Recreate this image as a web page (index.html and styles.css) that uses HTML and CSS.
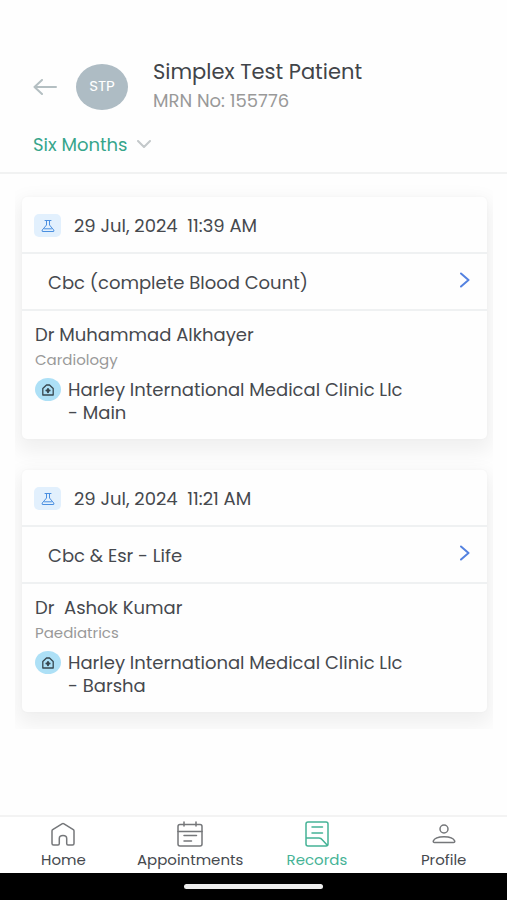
FILE: index.html
```html
<!DOCTYPE html>
<html lang="en">
<head>
    <meta charset="UTF-8">
    <meta name="viewport" content="width=device-width, initial-scale=1.0">
    <title>Records</title>
    <link rel="stylesheet" href="styles.css">
</head>
<body>
    <header class="header">
        <div class="patient">
            <button class="back" type="button" aria-label="Back">
                <svg width="24" height="16" viewBox="0 0 24 16"><path d="M23 8H2M9 1L1.500 8L9 15"/></svg>
            </button>
            <div class="avatar">STP</div>
            <div class="patient-info">
                <h1>Simplex Test Patient</h1>
                <p>MRN No: 155776</p>
            </div>
        </div>
        <div class="period">
            <select class="period-select" aria-label="Period">
                <option>Six Months</option>
            </select>
            <svg class="period-arrow" width="14" height="8" viewBox="0 0 14 8"><path d="M1 1L7 7L13 1"/></svg>
        </div>
    </header>

    <main class="records">
        <article class="card">
            <div class="card-date">
                <span class="lab-icon">
                    <svg width="14" height="14" viewBox="0 0 14 14"><path d="M4 1.500H10M5.500 1.500V6L1.300 11Q.3 12.500 2 12.500H12Q13.700 12.500 12.700 11L8.500 6V1.500M3.500 9.800H10.500"/></svg>
                </span>
                <time>29 Jul, 2024  11:39 AM</time>
            </div>
            <a class="card-test" href="#">
                <span>Cbc (complete Blood Count)</span>
                <svg width="10" height="16" viewBox="0 0 10 16"><path d="M1 1.500L8.500 8L1 14.500"/></svg>
            </a>
            <div class="card-body">
                <h2>Dr Muhammad Alkhayer</h2>
                <p class="speciality">Cardiology</p>
                <div class="clinic">
                    <span class="clinic-icon">
                        <svg width="12" height="12" viewBox="0 0 12 12"><path d="M.8 11V4.500L4.500 1H7.500L11.200 4.500V11Z"/><path class="cross" d="M6 5V8.200M4.400 6.600H7.600"/></svg>
                    </span>
                    <p>Harley International Medical Clinic Llc<br>- Main</p>
                </div>
            </div>
        </article>

        <article class="card">
            <div class="card-date">
                <span class="lab-icon">
                    <svg width="14" height="14" viewBox="0 0 14 14"><path d="M4 1.500H10M5.500 1.500V6L1.300 11Q.3 12.500 2 12.500H12Q13.700 12.500 12.700 11L8.500 6V1.500M3.500 9.800H10.500"/></svg>
                </span>
                <time>29 Jul, 2024  11:21 AM</time>
            </div>
            <a class="card-test" href="#">
                <span>Cbc &amp; Esr - Life</span>
                <svg width="10" height="16" viewBox="0 0 10 16"><path d="M1 1.500L8.500 8L1 14.500"/></svg>
            </a>
            <div class="card-body">
                <h2>Dr  Ashok Kumar</h2>
                <p class="speciality">Paediatrics</p>
                <div class="clinic">
                    <span class="clinic-icon">
                        <svg width="12" height="12" viewBox="0 0 12 12"><path d="M.8 11V4.500L4.500 1H7.500L11.200 4.500V11Z"/><path class="cross" d="M6 5V8.200M4.400 6.600H7.600"/></svg>
                    </span>
                    <p>Harley International Medical Clinic Llc<br>- Barsha</p>
                </div>
            </div>
        </article>
    </main>

    <nav class="tabs">
        <a class="tab" href="#">
            <svg width="26" height="26" viewBox="0 0 26 26"><path d="M2 10Q2 9.200 2.700 8.700L12 2.800Q13 2.200 14 2.800L23.300 8.700Q24 9.200 24 10V22.500Q24 24 22.500 24H18Q16.700 24 16.700 22.500V17.500Q16.700 14.500 13 14.500Q9.300 14.500 9.300 17.500V22.500Q9.300 24 8 24H3.500Q2 24 2 22.500Z"/></svg>
            <span>Home</span>
        </a>
        <a class="tab" href="#">
            <svg width="26" height="26" viewBox="0 0 26 26"><rect x="1" y="3.500" width="24" height="21.500" rx="2"/><path d="M1 10.500H25M7 1V5M19 1V5M7 14.500H19.500M7 20H14.500"/></svg>
            <span>Appointments</span>
        </a>
        <a class="tab active" href="#">
            <svg width="26" height="26" viewBox="0 0 26 26"><path d="M4 1H22Q24 1 24 3V23Q24 25 22 25H4Q2 25 2 23V3Q2 1 4 1ZM2 17H15Q17 17 18.500 19L23.500 24.500M8 6H18.500M8 12H18.500"/></svg>
            <span>Records</span>
        </a>
        <a class="tab" href="#">
            <svg width="26" height="26" viewBox="0 0 26 26"><circle cx="13" cy="8" r="4"/><path d="M3.500 21.500Q2 21.500 2.300 20Q4 15.800 13 15.800Q22 15.800 23.700 20Q24 21.500 22.500 21.500Z"/></svg>
            <span>Profile</span>
        </a>
    </nav>
    <div class="system-bar"><span class="home-indicator"></span></div>
</body>
</html>
```

FILE: styles.css
```css
* {
    box-sizing: border-box;
}
body {
    margin: 0;
    min-height: 100vh;
    display: flex;
    flex-direction: column;
    background-color: #fefefe;
    color: #46494e;
    font-family: Poppins, Inter, sans-serif;
    font-size: 18px;
    line-height: 23px;
}
h1, h2, p {
    margin: 0;
    font-weight: 400;
}
a {
    color: inherit;
    text-decoration: none;
}
svg {
    display: block;
    flex: none;
    fill: none;
    stroke: currentColor;
    stroke-linecap: round;
    stroke-linejoin: round;
}
.header {
    padding: 58px 33px 16px;
    border-bottom: 2px solid #f1f2f2;
}
.patient {
    display: flex;
    align-items: center;
}
.back {
    padding: 0;
    border: none;
    background: none;
    color: #b4bfc2;
    cursor: pointer;
}
.back svg {
    stroke-width: 2;
}
.avatar {
    display: flex;
    align-items: center;
    justify-content: center;
    width: 52px;
    height: 46px;
    margin: 0 25px 0 19px;
    padding-bottom: 3px;
    border-radius: 50%;
    background-color: #aebcc4;
    color: #fff;
    font-size: 15px;
}
.patient-info h1 {
    font-size: 21px;
    line-height: 28px;
    color: #414449;
}
.patient-info p {
    line-height: 30px;
    color: #999;
}
.period {
    display: flex;
    align-items: center;
    margin-top: 16px;
    height: 24px;
}
.period-select {
    appearance: none;
    field-sizing: content;
    padding: 0 24px 0 0;
    border: none;
    background: none;
    color: #36a58b;
    font: inherit;
}
.period-arrow {
    margin-left: -14px;
    color: #c3c8ca;
    stroke-width: 2;
    pointer-events: none;
}
.records {
    display: flex;
    flex-direction: column;
    gap: 31px;
    margin: 7px 14px auto 15px;
    padding: 16px 6px 17px 7px;
    overflow: hidden;
}
.card {
    border-radius: 5px;
    background-color: #fefefe;
    box-shadow: 0 8px 20px 5px rgba(0, 0, 0, 0.06), 0 0 3px rgba(0, 0, 0, 0.03);
}
.card-date,
.card-test {
    display: flex;
    align-items: center;
    height: 57px;
    border-bottom: 2px solid #eff1f2;
}
.card-date {
    gap: 13px;
    padding: 2px 12px 0;
    white-space: pre;
}
.lab-icon {
    display: flex;
    align-items: center;
    justify-content: center;
    width: 27px;
    height: 23px;
    border-radius: 5px;
    background-color: #e2f0fd;
    color: #4a8fe0;
}
.card-test {
    justify-content: space-between;
    padding: 2px 17px 0 26px;
}
.card-test svg {
    margin-bottom: 6px;
    color: #5482e0;
    stroke-width: 2;
}
.card-body {
    padding: 12px 13px 15px;
}
.card-body h2 {
    font-size: 18px;
    white-space: pre-wrap;
}
.speciality {
    margin: 2px 0 7px;
    color: #999;
    font-size: 15px;
}
.clinic {
    display: flex;
    align-items: flex-start;
    gap: 7px;
}
.clinic-icon {
    display: flex;
    flex: none;
    align-items: center;
    justify-content: center;
    width: 26px;
    height: 23px;
    border-radius: 50%;
    background-color: #ade0f6;
    color: #37474f;
}
.clinic-icon svg {
    stroke-width: 1.3;
}
.clinic-icon .cross {
    stroke-width: 2;
}
.tabs {
    display: grid;
    grid-template-columns: repeat(4, 1fr);
    height: 58px;
    border-top: 2px solid #f3f3f3;
    background-color: #fff;
}
.tab {
    display: flex;
    flex-direction: column;
    align-items: center;
    gap: 3px;
    padding-top: 4px;
    font-size: 15px;
    line-height: 20px;
}
.tab svg {
    color: #75777a;
    stroke-width: 1.5;
}
.tab.active,
.tab.active svg {
    color: #45b396;
}
.system-bar {
    display: flex;
    align-items: center;
    justify-content: center;
    height: 27px;
    background-color: #000;
}
.home-indicator {
    width: 139px;
    height: 5px;
    border-radius: 3px;
    background-color: #ededed;
}
```
